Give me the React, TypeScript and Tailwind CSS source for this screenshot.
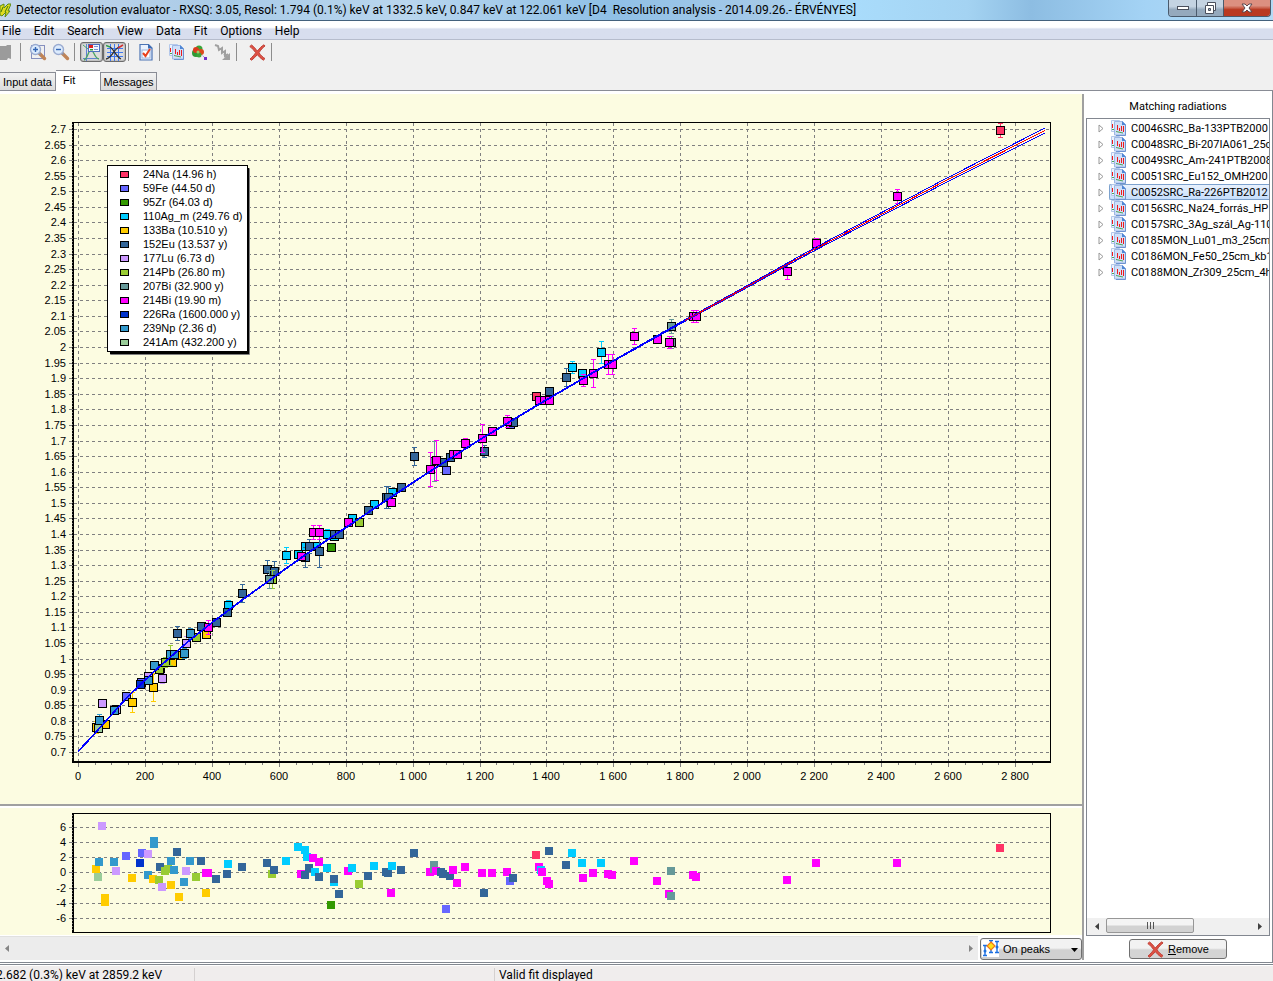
import type { ReactNode } from "react";

type Point = [x: number, y: number, err?: number];

interface Series {
  name: string;
  color: string;
  fit: Point[];
  residuals: Point[];
}

const SERIES: Series[] = [
  {
    name: "24Na (14.96 h)",
    color: "#ff3366",
    fit: [[536, 396], [1000, 130, 7]],
    residuals: [[536, 855], [1000, 848]],
  },
  {
    name: "59Fe (44.50 d)",
    color: "#6666ff",
    fit: [[126, 696], [141, 682], [446, 470], [510, 424]],
    residuals: [[126, 856], [142, 853], [446, 909], [510, 881]],
  },
  {
    name: "95Zr (64.03 d)",
    color: "#339900",
    fit: [[331, 547]],
    residuals: [[331, 905]],
  },
  {
    name: "110Ag_m (249.76 d)",
    color: "#00ccff",
    fit: [
      [228, 605, 5], [286, 555, 8], [298, 554], [305, 546], [316, 546], [327, 534, 5], [334, 536], [352, 518],
      [374, 504], [392, 492], [572, 367, 6], [582, 373], [601, 352, 11],
    ],
    residuals: [
      [228, 864], [286, 861], [298, 847], [305, 850], [307, 857], [315, 872], [327, 868], [334, 882],
      [352, 868], [374, 866], [392, 866], [541, 870], [572, 853], [582, 863], [601, 863],
    ],
  },
  {
    name: "133Ba (10.510 y)",
    color: "#ffcc00",
    fit: [[96, 727, 6], [105, 724], [132, 702, 10], [153, 687, 14], [172, 662], [180, 655], [206, 634]],
    residuals: [[96, 869], [105, 898], [105, 902], [132, 878], [153, 879], [171, 885], [179, 897], [206, 893]],
  },
  {
    name: "152Eu (13.537 y)",
    color: "#336699",
    fit: [
      [160, 668], [170, 654], [177, 633, 7], [201, 626], [216, 622], [227, 612], [242, 593, 9], [267, 569, 9],
      [274, 571, 10], [305, 557, 10], [309, 546, 7], [319, 551, 16], [334, 534], [339, 534], [368, 510],
      [386, 497, 11], [388, 497, 11], [401, 487], [414, 456, 9], [443, 462], [450, 457], [484, 451, 6],
      [513, 422], [549, 391], [566, 377, 9],
    ],
    residuals: [
      [160, 867], [177, 852], [201, 861], [216, 879], [227, 874], [242, 867], [267, 863], [274, 870],
      [305, 875], [309, 868], [319, 877], [334, 879], [339, 894], [368, 876], [386, 872], [388, 873],
      [401, 870], [414, 853], [441, 872], [443, 874], [450, 876], [484, 893], [513, 878], [549, 851], [566, 865],
    ],
  },
  {
    name: "177Lu (6.73 d)",
    color: "#cc99ff",
    fit: [[102, 703], [116, 709], [148, 676], [162, 678, 5], [186, 643, 7]],
    residuals: [[102, 826], [116, 871], [148, 854], [162, 887], [186, 871]],
  },
  {
    name: "214Pb (26.80 m)",
    color: "#99cc33",
    fit: [[159, 669], [165, 662, 5], [170, 655, 10], [196, 637], [272, 579, 9], [359, 522]],
    residuals: [[159, 880], [165, 871], [168, 869], [196, 877], [272, 874], [359, 884]],
  },
  {
    name: "207Bi (32.900 y)",
    color: "#669999",
    fit: [[269, 579, 9], [434, 461, 20], [671, 326, 7], [671, 342, 6]],
    residuals: [[434, 865], [434, 869], [671, 871], [671, 896]],
  },
  {
    name: "214Bi (19.90 m)",
    color: "#ff00ff",
    fit: [
      [208, 627, 7], [301, 556], [313, 532, 7], [319, 532, 7], [348, 522], [391, 502], [430, 469, 17],
      [436, 460, 20], [453, 454], [457, 454], [465, 443, 5], [482, 438, 14], [492, 431], [507, 421, 6],
      [539, 400], [544, 400], [549, 400], [583, 380, 6], [593, 373, 14], [608, 364, 10], [612, 364, 10],
      [634, 336, 8], [657, 339], [669, 342, 6], [693, 316, 6], [696, 316, 6], [787, 271, 8], [816, 243, 5], [897, 196, 7],
    ],
    residuals: [
      [206, 873], [208, 873], [301, 874], [313, 858], [319, 862], [348, 871], [391, 893], [430, 872],
      [436, 871], [453, 870], [457, 883], [465, 867], [482, 873], [492, 873], [507, 872], [539, 867],
      [542, 872], [547, 881], [549, 884], [583, 878], [593, 873], [608, 874], [612, 875], [634, 861],
      [657, 881], [669, 894], [693, 875], [696, 877], [787, 880], [816, 863], [897, 863],
    ],
  },
  {
    name: "226Ra (1600.000 y)",
    color: "#0033cc",
    fit: [[140, 684]],
    residuals: [[140, 863]],
  },
  {
    name: "239Np (2.36 d)",
    color: "#3399cc",
    fit: [
      [99, 720, 6], [114, 710], [148, 680], [154, 665], [170, 654], [174, 654], [184, 653, 5], [190, 633, 5],
    ],
    residuals: [[99, 862], [114, 862], [154, 841], [154, 844], [148, 875], [171, 861], [174, 870], [190, 861], [184, 882]],
  },
  {
    name: "241Am (432.200 y)",
    color: "#99cc99",
    fit: [[98, 728]],
    residuals: [[98, 877]],
  },
];

// residuals are painted from left to right, whatever nuclide they belong to
const RESIDUALS = SERIES.flatMap((s) => s.residuals.map(([x, y]) => ({ x, y, color: s.color }))).sort(
  (a, b) => a.x - b.x
);

const CURVE: Point[] = [
  [78, 751], [93, 735], [127, 697], [153, 672], [187, 642], [212, 622], [247, 596], [279, 573], [313, 549],
  [346, 527], [380, 504], [413, 482], [447, 460], [480, 439], [547, 399], [614, 360], [685, 320], [740, 290],
  [814, 249], [881, 214], [948, 179], [1045, 130],
];

const TREE = [
  "C0046SRC_Ba-133PTB2000",
  "C0048SRC_Bi-207IA061_25c",
  "C0049SRC_Am-241PTB2008",
  "C0051SRC_Eu152_OMH200",
  "C0052SRC_Ra-226PTB2012",
  "C0156SRC_Na24_forrás_HP",
  "C0157SRC_3Ag_szál_Ag-110",
  "C0185MON_Lu01_m3_25cm",
  "C0186MON_Fe50_25cm_kb1",
  "C0188MON_Zr309_25cm_4h",
];

const Y_TICKS = Array.from({ length: 41 }, (_, i) => 0.7 + i * 0.05);
const X_TICKS = Array.from({ length: 15 }, (_, i) => i * 200);

const px = (v: number) => Math.round(78 + v * 0.33464) + 0.5;
const py = (v: number) => Math.round(752 - (v - 0.7) * 311.5) + 0.5;
const thousands = (v: number) => (v >= 1000 ? `${Math.floor(v / 1000)} ${String(v % 1000).padStart(3, "0")}` : `${v}`);

// the confidence band widens with energy
const curvePath = (side: number) =>
  CURVE.map(([x, y]) => {
    const spread = x < 640 ? 0.5 : 0.5 + ((x - 640) / 405) * 2;
    return `${x},${y + 0.5 + side * spread}`;
  }).join(" ");

function FitChart() {
  return (
    <svg viewBox="0 94 1082 710" className="block h-auto w-full bg-[#fcfce1]" role="img" aria-label="Resolution fit">
      <g shapeRendering="crispEdges" stroke="#808080" strokeDasharray="3 3">
        {Y_TICKS.map((v) => (
          <line key={v} x1={74} x2={1050} y1={py(v)} y2={py(v)} />
        ))}
        {X_TICKS.map((v) => (
          <line key={v} x1={px(v)} x2={px(v)} y1={123} y2={761} />
        ))}
      </g>
      <g shapeRendering="crispEdges" stroke="#808080">
        {Y_TICKS.map((v) => (
          <line key={v} x1={69} x2={72} y1={py(v)} y2={py(v)} />
        ))}
        {Array.from({ length: 58 }, (_, i) => (
          <line key={i} x1={px(i * 50)} x2={px(i * 50)} y1={763} y2={i % 4 ? 765 : 767} />
        ))}
      </g>
      <g shapeRendering="crispEdges">
        <path d="M72 122.5H1050.5V762" fill="none" stroke="#000" />
        <path d="M73 122V762H1051" fill="none" stroke="#000" strokeWidth={2} />
        <line x1={72.5} x2={72.5} y1={124} y2={760} stroke="#808080" strokeDasharray="1 2" />
      </g>
      <g className="font-['Liberation_Sans'] text-[11px]" fill="#000">
        {Y_TICKS.map((v) => (
          <text key={v} x={66} y={Math.floor(py(v)) + 4} textAnchor="end">
            {Number(v.toFixed(2))}
          </text>
        ))}
        {X_TICKS.map((v) => (
          <text key={v} x={Math.floor(px(v))} y={780} textAnchor="middle">
            {thousands(v)}
          </text>
        ))}
      </g>
      <g shapeRendering="crispEdges">
        {SERIES.map((s) =>
          s.fit.map(([x, y, err], i) => (
            <g key={`${s.name}-${i}`}>
              {err && (
                <path
                  d={`M${x - 2} ${y - err + 0.5}h5M${x - 2} ${y + err + 0.5}h5M${x + 0.5} ${y - err}v${err * 2}`}
                  stroke={s.color}
                />
              )}
              <rect x={x - 3.5} y={y - 3.5} width={8} height={8} fill={s.color} stroke="#000" />
            </g>
          ))
        )}
      </g>
      <g fill="none" shapeRendering="crispEdges">
        <polyline points={curvePath(-1)} stroke="#0000ff" />
        <polyline points={curvePath(1)} stroke="#0000ff" />
        <polyline points={curvePath(0)} stroke="#ff0000" />
        <polyline points={CURVE.slice(0, 17).map(([x, y]) => `${x},${y + 0.5}`).join(" ")} stroke="#0000ff" />
      </g>
      <g className="font-['Liberation_Sans'] text-[11px]">
        <rect x={110} y={168} width={140} height={187} rx={1} fill="#808080" />
        <rect x={110} y={168} width={139} height={186} fill="#000" />
        <rect x={107.5} y={165.5} width={140} height={186} fill="#fff" stroke="#000" shapeRendering="crispEdges" />
        {SERIES.map((s, i) => (
          <g key={s.name}>
            <rect
              x={120.5}
              y={171.5 + i * 14}
              width={8}
              height={6}
              fill={s.color}
              stroke="#000"
              shapeRendering="crispEdges"
            />
            <text x={143} y={178 + i * 14}>
              {s.name}
            </text>
          </g>
        ))}
      </g>
    </svg>
  );
}

function ResidualChart() {
  const rows: [number, number][] = [[6, 827], [4, 842], [2, 857], [0, 872], [-2, 888], [-4, 903], [-6, 918]];
  return (
    <svg viewBox="0 808 1082 127" className="block h-auto w-full bg-[#fcfce1]" role="img" aria-label="Residuals">
      <g shapeRendering="crispEdges">
        {rows.map(([v, y]) => (
          <g key={v} stroke="#808080">
            <line x1={74} x2={1050} y1={y + 0.5} y2={y + 0.5} strokeDasharray="3 3" />
            <line x1={69} x2={72} y1={y + 0.5} y2={y + 0.5} />
          </g>
        ))}
        <path d="M72 813.5H1050.5V932.5H72" fill="none" stroke="#000" />
        <line x1={73} x2={73} y1={813} y2={933} stroke="#000" strokeWidth={2} />
        <line x1={72.5} x2={72.5} y1={815} y2={931} stroke="#808080" strokeDasharray="1 2" />
        {RESIDUALS.map(({ x, y, color }, i) => (
          <rect key={i} x={x - 4} y={y - 4} width={8} height={8} fill={color} />
        ))}
      </g>
      <g className="font-['Liberation_Sans'] text-[11px]">
        {rows.map(([v, y]) => (
          <text key={v} x={66} y={y + 4} textAnchor="end">
            {v}
          </text>
        ))}
      </g>
    </svg>
  );
}

function SpectrumIcon() {
  return (
    <svg width="17" height="16" viewBox="0 0 17 16" className="shrink-0">
      <path d="M1.500.5h8l1 2v9h-9z" fill="#edf3fe" stroke="#b4c8ea" />
      <path d="M4.500 1.500h8l3 3v10.500h-11z" fill="#cfdff9" stroke="#9db7e4" />
      <path d="M12 1l4 4h-4z" fill="#4f86d4" />
      <path d="M15.500 5v10.500H6" fill="none" stroke="#6f93d0" />
      <path d="M2.500 4v4M7.500 5v5M9.500 8v3M11.500 6v5M13.500 6v6" stroke="#ee1c1c" />
      <path d="M2 9.500h2M6 11.500l7 1.500" stroke="#4fa35a" fill="none" />
    </svg>
  );
}

function MagnifierIcon({ plus }: { plus?: boolean }) {
  return (
    <svg width="18" height="18" viewBox="0 0 18 18">
      {plus && <rect x="2.500" y="2.500" width="13" height="13" fill="none" stroke="#1c2f8c" strokeDasharray="1 1" />}
      <path d="M10.500 10.500l5 5" stroke="#c08457" strokeWidth="3.400" strokeLinecap="round" />
      <path d="M9.500 9.500l2 2" stroke="#8f8f9c" strokeWidth="2" />
      <circle cx="6.500" cy="6.500" r="5" fill="#dcebfd" stroke="#9aabd0" strokeWidth="1.400" />
      <path d={plus ? "M4 6.500h5M6.500 4v5" : "M4 6.500h5"} stroke="#3567b5" strokeWidth="1.400" />
    </svg>
  );
}

function CrossIcon() {
  return (
    <svg width="17" height="17" viewBox="0 0 17 17">
      <path
        d="M2.500 1C5 2.500 6.500 5 8.300 7 10.500 4.500 12.500 2 15 .8L16 2C13.800 3.500 11.500 6.300 10 8.700 11.500 11 13.500 13 16 14.600L14.300 16.200C12 14.500 10 12.800 8.300 10.700 6.500 12.800 4.800 14.500 2.700 16.200L1 15C3.500 12.700 5.300 10.800 6.700 8.700 5 6.500 3 4 .8 2.500z"
        fill="#dd5044"
        stroke="#c04238"
      />
    </svg>
  );
}

function LegendIcon() {
  return (
    <svg width="18" height="17" viewBox="0 0 18 17">
      <path d="M3.500 0v17M0 14.500h16" stroke="#5f83d0" />
      <path d="M1 16C5 15 5 6 8 6s3 8 8 9" fill="none" stroke="#4aa564" strokeWidth="1.300" />
      <path d="M0 1l5 4" stroke="#4aa564" />
      <rect x="5.500" y=".5" width="11" height="7" fill="#f2f6ff" stroke="#4c6fc0" />
      <rect x="6" y="1" width="4" height="3" fill="#e02020" />
      <path d="M11 2.500h4M11 5.500h4" stroke="#7c94d0" />
      <rect x="7" y="5" width="3" height="1.500" fill="#30a030" />
    </svg>
  );
}

function GridIcon() {
  return (
    <svg width="18" height="17" viewBox="0 0 18 17">
      <path d="M4.500 0v17M8.500 0v17M12.500 0v17M1 4.500h16M1 8.500h16M1 12.500h16" stroke="#3f78f0" />
      <path d="M0 15C6 14 8 5 13 3" fill="none" stroke="#303030" strokeWidth="1.300" />
      <path d="M4 3C8 5 10 13 15 15" fill="none" stroke="#303030" strokeWidth="1.300" />
      <path d="M0 1.500l4 1.500" stroke="#30a050" strokeWidth="1.500" />
      <path d="M12 4l5-3" stroke="#d03030" strokeWidth="1.500" />
    </svg>
  );
}

function CheckDocIcon() {
  return (
    <svg width="14" height="17" viewBox="0 0 14 17">
      <path d="M1 .5h8.500l3.500 3.500v12H1z" fill="#eaf2fe" stroke="#4c74b4" strokeWidth="1.200" />
      <path d="M9 0l4.500 4.500H9z" fill="#3d6cb4" />
      <rect x="3" y="6" width="8" height="8" fill="#fff" stroke="#9ab3dc" />
      <path d="M4 9l2.500 3L11 5" fill="none" stroke="#e8401c" strokeWidth="2" />
    </svg>
  );
}

function NuclideIcon() {
  return (
    <svg width="18" height="17" viewBox="0 0 18 17">
      <path d="M9 9l5 5" stroke="#7a3ccf" strokeDasharray="1 1" />
      <circle cx="5" cy="9" r="4" fill="#2f9a35" />
      <circle cx="8" cy="5" r="3.500" fill="#3aa53a" />
      <circle cx="5" cy="6" r="3" fill="#dc3a1c" />
      <circle cx="10" cy="8" r="3" fill="#dc4a1c" />
      <circle cx="8" cy="11" r="2.500" fill="#3aa53a" />
      <circle cx="7" cy="8" r="1.500" fill="#9bd070" />
      <rect x="13" y="13" width="3" height="3" fill="#7030c8" />
    </svg>
  );
}

function DecayIcon() {
  return (
    <svg width="17" height="17" viewBox="0 0 17 17">
      <path d="M1 1l3 1 1 4 3-2v5l3-2v5l3-2" fill="none" stroke="#a0a0a0" strokeWidth="2" />
      <path d="M16 9v7H8z" fill="#a0a0a0" />
      <path d="M10 10l4 4" stroke="#a0a0a0" strokeWidth="2" />
    </svg>
  );
}

function PeaksIcon() {
  return (
    <svg width="17" height="17" viewBox="0 0 17 17">
      <path d="M0 0h17v17H0z" fill="#fff" />
      <path d="M1 5.500h4M1 15.500h4M3 5v11M7 .5h4M7 12.500h4M9 0v13M13 1.500h4M13 12.500h4M15 1v12" stroke="#1c6fe0" strokeWidth="1.400" />
      <circle cx="3" cy="11" r="1.500" fill="#1c6fe0" />
      <circle cx="15" cy="7" r="1.500" fill="#1c6fe0" />
      <path d="M9 2l4 4-4 4-4-4z" fill="#ffe11a" stroke="#f07818" strokeWidth="1.200" />
    </svg>
  );
}

function ToolButton({ label, pressed, children }: { label: string; pressed?: boolean; children: ReactNode }) {
  return (
    <button
      aria-label={label}
      aria-pressed={pressed}
      className={
        pressed
          ? "flex h-5 w-[23px] items-center justify-center rounded-[3px] border border-[#6b6b6b] bg-[#dcdcdc] shadow-[inset_0_0_2px_#777]"
          : "flex h-5 w-[23px] items-center justify-center"
      }
    >
      {children}
    </button>
  );
}

const Separator = () => <div className="mt-px mr-[5px] ml-0.5 h-[18px] w-px bg-[#8d8d8d]" />;

function TitleBar() {
  return (
    <header className="flex h-[21px] items-start justify-between border-b border-[#44617c] bg-[linear-gradient(90deg,#c3d6ea_0%,#a9cbe8_18%,#b9d6ee_32%,#8fc0e6_48%,#a5c9e8_60%,#a9dcfb_67%,#a4d3f2_76%,#8dbde2_81%,#a4d3f5_90%,#b4daf5_100%)]">
      <div className="flex h-5 items-center gap-[5px]">
        <svg width="11" height="14" viewBox="0 0 11 14" className="shrink-0">
          <path d="M0 3l4-2v4l4-4h3l-3 7h2l-5 6 1-5-4 4-2-1z" fill="#e0dc20" stroke="#5c8a14" />
          <path d="M1 9l2-5M5 9l3-6" stroke="#3e7a10" />
        </svg>
        <h1 className="font-['Roboto'] text-[12px] whitespace-pre">
          {"Detector resolution evaluator - RXSQ: 3.05, Resol: 1.794 (0.1%) keV at 1332.5 keV, 0.847 keV at 122.061 keV [D4  Resolution analysis - 2014.09.26.- ÉRVÉNYES]"}
        </h1>
      </div>
      <div className="mr-0.5 flex h-[17px] shrink-0 overflow-hidden rounded-b-[4px] border border-t-0 border-[#4a5a6c]">
        <button aria-label="Minimize" className="flex w-7 items-center justify-center border-r border-[#4a5a6c] bg-linear-to-b from-[#c4d3e2] from-40% to-[#95a9bd] to-60%">
          <svg width="12" height="6" viewBox="0 0 12 6">
            <rect x=".5" y="1.500" width="11" height="3" fill="#fff" stroke="#4a4f5c" />
          </svg>
        </button>
        <button aria-label="Restore" className="flex w-[27px] items-center justify-center border-r border-[#4a5a6c] bg-linear-to-b from-[#c4d3e2] from-40% to-[#95a9bd] to-60%">
          <svg width="13" height="13" viewBox="0 0 13 13">
            <path d="M3.500.5h8v8h-8z" fill="#fff" stroke="#4a4f5c" />
            <path d="M1.500 3.500h8v8h-8z" fill="#fff" stroke="#4a4f5c" />
            <path d="M4.500 6.500h2v2h-2z" fill="#9fb2c6" stroke="#4a4f5c" />
          </svg>
        </button>
        <button aria-label="Close" className="flex w-[46px] items-center justify-center bg-linear-to-b from-[#dc9080] from-35% to-[#b93a22] to-60%">
          <svg width="12" height="10" viewBox="0 0 12 10">
            <path d="M1 1h3l2 2 2-2h3L8 5l3 4H8L6 7 4 9H1l3-4z" fill="#fff" stroke="#5a4a50" />
          </svg>
        </button>
      </div>
    </header>
  );
}

function MatchingPanel() {
  return (
    <aside className="flex min-h-0 flex-col border-r border-[#828790] pr-0.5 pl-0.5">
      <h2 className="flex h-[27px] items-center justify-center pt-1 font-['Roboto']">Matching radiations</h2>
      <div className="flex flex-1 flex-col overflow-hidden border border-[#828790]">
        <ul className="flex-1 pt-px font-['Roboto']">
          {TREE.map((name, i) => (
            <li key={name} className="flex h-4 items-center pl-[11px]">
              <svg width="6" height="9" viewBox="0 0 6 9" className="shrink-0">
                <path d="M1 1v7l4-3.500z" fill="#fff" stroke="#989898" />
              </svg>
              <button
                className={
                  i === 4
                    ? "ml-[5px] flex h-4 flex-1 items-center gap-1 rounded-l-[2px] border border-r-0 border-[#7da2ce] bg-linear-to-b from-[#e8f1fd] to-[#c6defb] whitespace-nowrap"
                    : "ml-[5px] flex h-4 flex-1 items-center gap-1 border border-r-0 border-transparent whitespace-nowrap"
                }
              >
                <SpectrumIcon />
                <span className="pt-px">{name}</span>
              </button>
            </li>
          ))}
        </ul>
        <div className="flex h-[17px] items-stretch bg-[#f0f0f0]">
          <button aria-label="Scroll left" className="flex w-[19px] items-center justify-center">
            <svg width="4" height="7" viewBox="0 0 4 7"><path d="M4 0v7L0 3.500z" fill="#404040" /></svg>
          </button>
          <button aria-label="Scroll thumb" className="mb-0.5 flex w-[88px] items-center justify-center gap-0.5 rounded-[2px] border border-[#979797] bg-linear-to-b from-[#f4f4f4] from-45% to-[#d2d2d2] to-55%">
            <span className="h-[7px] w-px bg-[#555]" />
            <span className="h-[7px] w-px bg-[#555]" />
            <span className="h-[7px] w-px bg-[#555]" />
          </button>
          <button aria-label="Scroll right" className="ml-auto flex w-[19px] items-center justify-center">
            <svg width="4" height="7" viewBox="0 0 4 7"><path d="M0 0v7l4-3.500z" fill="#404040" /></svg>
          </button>
        </div>
      </div>
      <div className="flex h-[26px] items-center justify-center">
        <button className="flex h-5 w-[98px] items-center justify-center gap-1 rounded-[3px] border border-[#707070] bg-linear-to-b from-[#f2f2f2] from-45% to-[#d4d4d4] to-55%">
          <CrossIcon />
          <span><u>R</u>emove</span>
        </button>
      </div>
    </aside>
  );
}

export default function App() {
  return (
    <div className="flex min-h-screen flex-col overflow-hidden bg-white font-['Liberation_Sans'] text-[11px] leading-[14px] text-black">
      <TitleBar />
      <nav className="flex h-[19px] items-center gap-[13px] border-b border-[#b6bccc] bg-linear-to-b from-white from-35% to-[#d8deee] to-45% pt-px pl-0.5 font-['Roboto'] text-[12px]">
        {["File", "Edit", "Search", "View", "Data", "Fit", "Options", "Help"].map((item) => (
          <button key={item}>{item}</button>
        ))}
      </nav>

      <div className="flex h-[30px] items-start bg-[#f0f0f0] pt-0.5">
        <button aria-label="Stop" className="flex h-5 w-[18px] items-center">
          <svg width="11" height="17" viewBox="0 0 11 17"><path d="M0 2h6l1-1h4v14l-3-1-1 2H0z" fill="#9b9b9b" /></svg>
        </button>
        <Separator />
        <ToolButton label="Zoom in"><MagnifierIcon plus /></ToolButton>
        <ToolButton label="Zoom out"><MagnifierIcon /></ToolButton>
        <Separator />
        <ToolButton label="Show legend" pressed><LegendIcon /></ToolButton>
        <ToolButton label="Show grid" pressed><GridIcon /></ToolButton>
        <Separator />
        <ToolButton label="Report"><CheckDocIcon /></ToolButton>
        <Separator />
        <ToolButton label="Spectrum"><SpectrumIcon /></ToolButton>
        <ToolButton label="Nuclides"><NuclideIcon /></ToolButton>
        <ToolButton label="Decay"><DecayIcon /></ToolButton>
        <Separator />
        <div className="flex pl-1">
          <ToolButton label="Delete"><CrossIcon /></ToolButton>
          <Separator />
        </div>
      </div>

      <div role="tablist" className="flex h-[21px] items-end bg-[#f0f0f0]">
        <button role="tab" className="h-[19px] w-14 border border-l-0 border-[#898c95] bg-linear-to-b from-[#f2f2f2] to-[#dcdcdc] text-center">
          Input data
        </button>
        <button role="tab" aria-selected className="h-[21px] w-11 border-t border-[#898c95] bg-white pb-0.5 pl-[7px] text-left">
          Fit
        </button>
        <button role="tab" className="h-[19px] w-[57px] border border-[#898c95] bg-linear-to-b from-[#f2f2f2] to-[#dcdcdc] text-center">
          Messages
        </button>
        <div className="flex-1 border-b border-[#898c95]" />
      </div>

      <main className="grid grid-cols-[minmax(0,1fr)_189px]">
        <div className="mt-[3px] mb-0.5 border-r-2 border-[#a0a0a0]">
          <FitChart />
          <div className="h-1 border-t-2 border-[#a0a0a0] bg-white" />
          <ResidualChart />
          <div className="flex h-[25px] items-stretch pt-px">
            <div className="flex flex-1 items-center justify-between border-t border-[#e0e0e0] bg-[#ececec] px-[5px]">
              <svg width="4" height="7" viewBox="0 0 4 7"><path d="M4 0v7L0 3.500z" fill="#858585" /></svg>
              <svg width="4" height="7" viewBox="0 0 4 7"><path d="M0 0v7l4-3.500z" fill="#858585" /></svg>
            </div>
            <div className="relative mt-0.5 ml-0.5 w-[102px]">
              <select
                aria-label="Error bars"
                className="h-[22px] w-full appearance-none rounded-[3px] border border-[#707070] bg-linear-to-b from-[#f2f2f2] from-45% to-[#d0d0d0] to-55% pl-[22px]"
              >
                <option>On peaks</option>
              </select>
              <span className="pointer-events-none absolute top-0.5 left-0.5"><PeaksIcon /></span>
              <svg width="7" height="4" viewBox="0 0 7 4" className="pointer-events-none absolute top-[10px] right-1">
                <path d="M0 0h7L3.500 4z" fill="#000" />
              </svg>
            </div>
          </div>
        </div>
        <MatchingPanel />
      </main>

      <div className="h-[3px] border-y border-[#828790]" />
      <footer className="mt-px flex h-4 items-center bg-[#f0eded] pt-px font-['Roboto'] text-[12px]">
        <span className="-ml-1 w-[199px] border-r border-[#d4d0d0]">2.682 (0.3%) keV at 2859.2 keV</span>
        <span className="w-[300px] border-r border-[#d4d0d0]">&nbsp;</span>
        <span className="pl-1">Valid fit displayed</span>
      </footer>
    </div>
  );
}
